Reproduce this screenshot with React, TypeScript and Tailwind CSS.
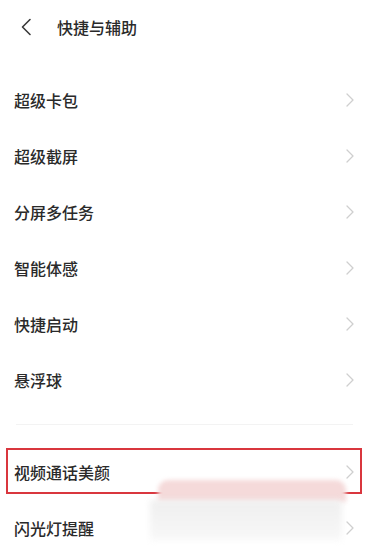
import React from "react";

const Chevron = () => (
  <svg width="8" height="14" viewBox="0 0 8 14" fill="none" className="shrink-0">
    <path d="M1 1l6 6-6 6" stroke="#cfcfcf" strokeWidth="1.3" strokeLinecap="round" strokeLinejoin="round" />
  </svg>
);

const Row = ({ label }: { label: string }) => (
  <div className="flex h-[56px] items-center justify-between pl-[14px] pr-[15px]">
    <span className="text-[16px] font-medium text-[#2a2a2a]">{label}</span>
    <Chevron />
  </div>
);

export default function App() {
  const top = ["超级卡包", "超级截屏", "分屏多任务", "智能体感", "快捷启动", "悬浮球"];
  return (
    <div
      className="relative h-[547px] w-[369px] overflow-hidden bg-white"
      style={{ fontFamily: '"Noto Sans CJK SC", "Noto Sans", sans-serif' }}
    >
      <div className="flex h-[54px] items-center pl-[20px]">
        <svg width="12" height="18" viewBox="0 0 12 18" fill="none">
          <path d="M10 1.5L2.5 9l7.5 7.5" stroke="#3a3a3a" strokeWidth="1.6" strokeLinecap="round" strokeLinejoin="round" />
        </svg>
        <span className="ml-[25px] text-[16px] font-medium text-[#2a2a2a]">快捷与辅助</span>
      </div>
      <div className="h-[18px]" />
      {top.map((t) => (
        <Row key={t} label={t} />
      ))}
      <div className="px-[16px] pt-[16px] pb-[19px]">
        <div className="h-px bg-[#f3f3f3]" />
      </div>
      <div className="relative">
        <Row label="视频通话美颜" />
        <div className="pointer-events-none absolute left-[6px] right-[7px] top-[4px] h-[46px] border-2 border-[#d9363e]" />
      </div>
      <Row label="闪光灯提醒" />
      <div className="pointer-events-none absolute left-[158px] top-[480px] h-[22px] w-[188px] rounded-t-[10px] bg-[#f5dada] blur-[2px]" />
      <div className="pointer-events-none absolute left-[150px] top-[500px] h-[40px] w-[192px] bg-gradient-to-b from-[#efefef] to-[#f8f8f8] blur-[3px]" />
    </div>
  );
}
